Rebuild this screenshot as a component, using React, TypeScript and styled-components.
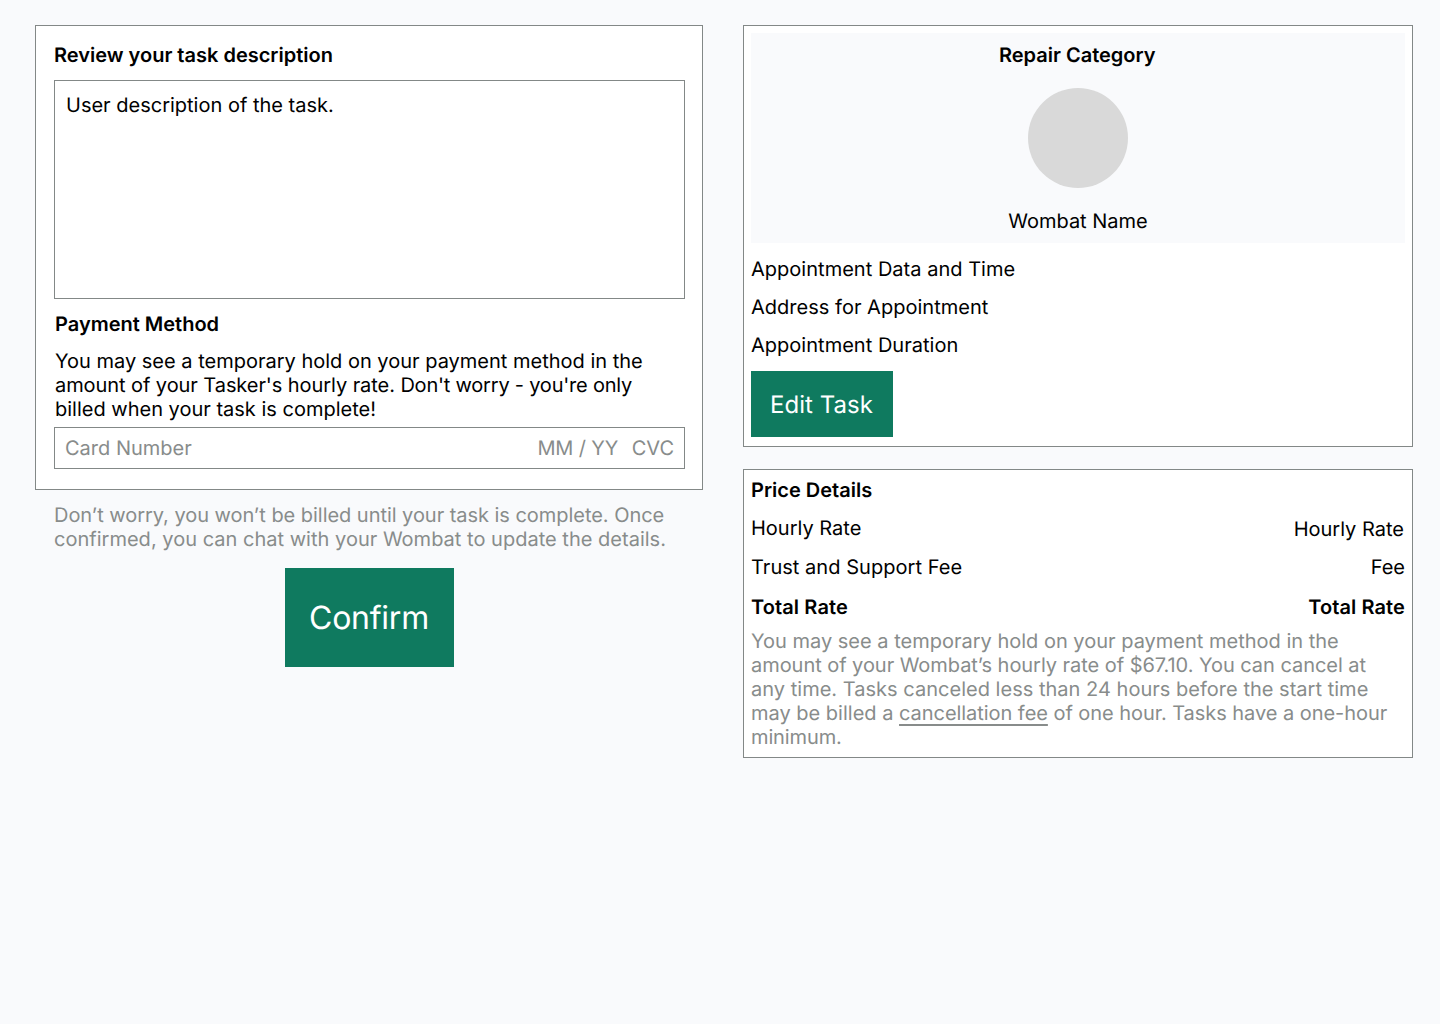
import React from "react";
import styled, { createGlobalStyle } from "styled-components";

const Global = createGlobalStyle`
  * { box-sizing: border-box; }
  body {
    margin: 0;
    background: #f9fafc;
    font-family: Inter, sans-serif;
    text-rendering: geometricPrecision;
  }
`;

const Page = styled.main`
  min-height: 1024px;
  padding: 25px 27px 0 35px;
  display: grid;
  grid-template-columns: 668px 670px;
  column-gap: 40px;
  align-items: start;
  background: #f9fafc;
  color: #000;
  font-size: 20px;
  line-height: 24px;
`;

const Column = styled.div`
  display: flex;
  flex-direction: column;
`;

const Panel = styled.section<{ $pad: string; $height: number }>`
  display: flex;
  flex-direction: column;
  height: ${(p) => p.$height}px;
  padding: ${(p) => p.$pad};
  background: #fff;
  border: 1px solid #838887;
`;

const PricePanel = styled(Panel)`
  margin-top: 22px;
`;

const Heading = styled.h2`
  margin: 0;
  font-size: 20px;
  line-height: 24px;
  font-weight: 600;
`;

const CategoryHeading = styled(Heading)`
  padding-right: 1.5px;
`;

const Description = styled.div`
  height: 219px;
  margin: 13px 0;
  padding: 12px 11px;
  background: #fff;
  border: 1px solid #838887;
`;

const Payment = styled.div`
  padding-left: 1px;
`;

const Copy = styled.p<{ $muted?: boolean }>`
  margin: 0;
  color: ${(p) => (p.$muted ? "#888c8b" : "#000")};
  white-space: nowrap;
`;

const PaymentCopy = styled(Copy)`
  margin-top: 13px;
`;

const Tracked = styled.span<{ $spacing: number }>`
  letter-spacing: ${(p) => p.$spacing}px;
`;

const CardInput = styled.div`
  display: flex;
  align-items: center;
  height: 42px;
  margin-top: 6px;
  padding: 0 10px;
  color: #888c8b;
  border: 1px solid #838887;
`;

const CardLabel = styled.span`
  margin-right: auto;
`;

const Cvc = styled.span`
  margin-left: 13.5px;
`;

const Note = styled(Copy)`
  margin: 13px 0 17px 19px;
`;

const Button = styled.button<{ $large?: boolean }>`
  width: ${(p) => (p.$large ? 169 : 142)}px;
  height: ${(p) => (p.$large ? 99 : 66)}px;
  padding: ${(p) => (p.$large ? "0" : "0 1px 0 0")};
  border: 0;
  background: #0f7a5f;
  color: #fff;
  font-family: inherit;
  font-size: ${(p) => (p.$large ? 32 : 24)}px;
  font-weight: 400;
  letter-spacing: ${(p) => (p.$large ? -0.25 : 0.05)}px;
  text-rendering: inherit;
  align-self: ${(p) => (p.$large ? "center" : "flex-start")};
`;

const Profile = styled.div`
  display: flex;
  flex-direction: column;
  align-items: center;
  height: 210px;
  padding-top: 10px;
  background: #f9fafc;
`;

const Avatar = styled.div`
  width: 100px;
  height: 100px;
  margin: 21px 0;
  border-radius: 50%;
  background: #d9d9d9;
`;

const Details = styled.div`
  display: flex;
  flex-direction: column;
  gap: 14px;
  margin: 14px 0;
  letter-spacing: 0.02px;
`;

const PriceRow = styled.div<{ $top: number; $bold?: boolean }>`
  display: flex;
  justify-content: space-between;
  margin-top: ${(p) => p.$top}px;
  font-weight: ${(p) => (p.$bold ? 600 : 400)};
  letter-spacing: ${(p) => (p.$bold ? 0.1 : 0)}px;
`;

const Rate = styled.span`
  margin: 1px 1px -1px 0;
`;

const PriceNote = styled(Copy)`
  margin-top: 10px;
`;

const Fee = styled.span`
  letter-spacing: -0.05px;
  text-decoration: underline 1.5px;
  text-underline-offset: 4px;
  text-decoration-skip-ink: none;
`;

export default function App() {
  return (
    <>
      <Global />
      <Page>
        <Column>
          <Panel $height={465} $pad="17px 17px 0 18px">
            <Heading>Review your task description</Heading>
            <Description>User description of the task.</Description>
            <Payment>
              <Heading>Payment Method</Heading>
              <PaymentCopy>
                You may see a temporary hold on your payment method in the<br />
                <Tracked $spacing={-0.07}>amount of your Tasker's hourly rate. </Tracked>
                <Tracked $spacing={-0.21}>Don't worry - you're only</Tracked><br />
                billed when your task is complete!
              </PaymentCopy>
            </Payment>
            <CardInput>
              <CardLabel>Card Number</CardLabel>
              <Tracked $spacing={-0.15}>MM / YY</Tracked>
              <Cvc>CVC</Cvc>
            </CardInput>
          </Panel>
          <Note $muted>
            <Tracked $spacing={-0.04}>Don’t worry, you won’t be billed until your task is complete. Once</Tracked><br />
            <Tracked $spacing={0.015}>confirmed, you can chat with your Wombat to update the details.</Tracked>
          </Note>
          <Button $large>Confirm</Button>
        </Column>
        <Column>
          <Panel $height={422} $pad="7px">
            <Profile>
              <CategoryHeading>Repair Category</CategoryHeading>
              <Avatar />
              <span>Wombat Name</span>
            </Profile>
            <Details>
              <span>Appointment Data and Time</span>
              <span>Address for Appointment</span>
              <span>Appointment Duration</span>
            </Details>
            <Button>Edit Task</Button>
          </Panel>
          <PricePanel $height={289} $pad="8px 7px 0">
            <Heading>Price Details</Heading>
            <PriceRow $top={14}>
              <span>Hourly Rate</span>
              <Rate>Hourly Rate</Rate>
            </PriceRow>
            <PriceRow $top={15}>
              <Tracked $spacing={0.04}>Trust and Support Fee</Tracked>
              <span>Fee</span>
            </PriceRow>
            <PriceRow $top={16} $bold>
              <span>Total Rate</span>
              <span>Total Rate</span>
            </PriceRow>
            <PriceNote $muted>
              You may see a temporary hold on your payment method in the<br />
              <Tracked $spacing={-0.045}>amount of your Wombat’s hourly rate of $67.10. You can cancel at</Tracked><br />
              <Tracked $spacing={0.02}>any time. Tasks canceled less than 24 hours before the start time</Tracked><br />
              may be billed a <Fee>cancellation fee</Fee>
              <Tracked $spacing={-0.05}> of one hour. Tasks have a one-hour</Tracked><br />
              <Tracked $spacing={-0.12}>minimum.</Tracked>
            </PriceNote>
          </PricePanel>
        </Column>
      </Page>
    </>
  );
}
